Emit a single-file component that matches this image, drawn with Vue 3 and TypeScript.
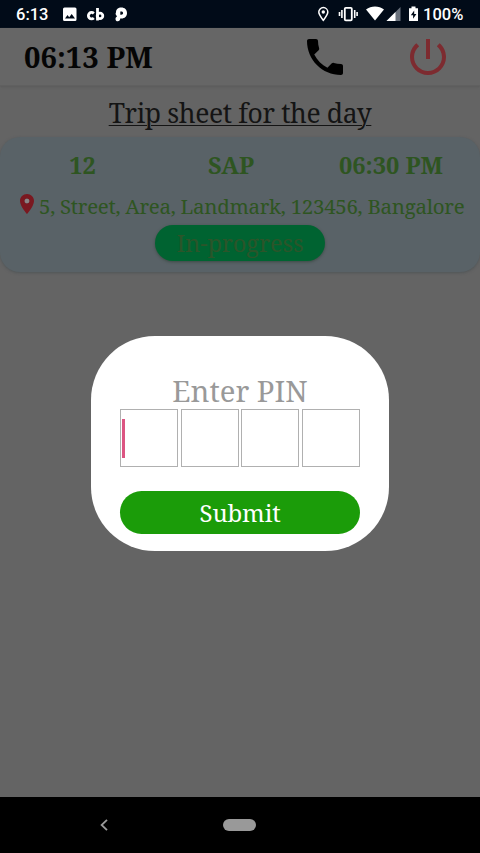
<script setup lang="ts">
import { ref } from 'vue'

interface Trip {
  count: string
  company: string
  time: string
  address: string
  status: string
}

const trip: Trip = {
  count: '12',
  company: 'SAP',
  time: '06:30 PM',
  address: '5, Street, Area, Landmark, 123456, Bangalore',
  status: 'In-progress',
}
const active = ref<number>(0)
</script>

<template>
  <div class="screen">
    <div class="status">
      <span class="clock">6:13</span>
      <svg class="left-icons" width="66" height="28" viewBox="0 0 66 28">
        <path fill="#fff" fill-rule="evenodd" d="M2.500 7.500h10.500q1.500 0 1.500 1.500v10.500q0 1.500-1.500 1.500H2.500Q1 21 1 19.500V9q0-1.500 1.500-1.500zM3 18.500h10l-3.300-4.500-2.500 3.200-1.700-2.100z" />
        <g fill="none" stroke="#fff" stroke-width="2.800">
          <path d="M31.800 13.400a3.200 3.200 0 1 0 0 4.600M35.500 8v12.400" />
          <circle cx="38" cy="15.900" r="2.800" />
        </g>
        <path fill="#fff" fill-rule="evenodd" d="M54 12.300c0-3 2.200-4.800 5.300-4.800 3.400 0 5.700 2.200 5.700 5.400 0 3.300-2.300 5.500-5.500 5.500h-1.300c0 1.800-.9 2.800-2.400 2.800-1.400 0-2.300-.9-2.300-2.300 0-1 .5-1.800 1.500-2.300l-1.500-2.500zM58.300 11.500v3.300h1c1.100 0 1.800-.7 1.800-1.700s-.7-1.600-1.800-1.600z" />
      </svg>
      <svg class="right-icons" width="104" height="28" viewBox="0 0 104 28">
        <path fill="none" stroke="#fff" stroke-width="1.500" d="M7.300 20.300c-2.600-3.200-4.500-5.500-4.500-8.200a4.500 4.500 0 0 1 9 0c0 2.700-1.900 5-4.500 8.200z" />
        <circle cx="7.300" cy="12" r="1.700" fill="#fff" />
        <rect x="28.800" y="7.800" width="7" height="12.500" rx="1" fill="none" stroke="#fff" stroke-width="1.800" />
        <path stroke="#fff" stroke-width="1.600" d="M25.900 10v8M23.500 12v4M38.700 10v8M41.100 12v4" />
        <path fill="#fff" d="M50 9.400c5-4 13-4 18 0L59 20.500z" />
        <path fill="#69717c" d="M84.500 7v14H70.500z" />
        <path fill="#fff" d="M79.500 12v9h-9z" />
        <path fill="#fff" fill-rule="evenodd" d="M95.500 6.500h4v1.700h2.500V21h-9V8.200h2.500zM98.200 10.500l-3.400 4.700h2.300v3.500l3.300-4.700h-2.200z" />
      </svg>
      <span class="battery">100%</span>
    </div>

    <header class="bar">
      <span class="time">06:13 PM</span>
      <svg class="phone" width="36" height="36" viewBox="3 3 18 18">
        <path d="M6.620 10.790c1.440 2.830 3.760 5.140 6.590 6.590l2.200-2.200c.27-.27.67-.36 1.020-.24 1.120.37 2.330.57 3.570.57.55 0 1 .45 1 1V20c0 .55-.45 1-1 1-9.390 0-17-7.610-17-17 0-.55.45-1 1-1h3.500c.55 0 1 .45 1 1 0 1.250.2 2.450.57 3.570.11.350.030.740-.25 1.020l-2.200 2.200z" />
      </svg>
      <svg class="power" width="36" height="36" viewBox="3 3 18 18">
        <path fill="#7d2b30" d="M13 3h-2v10h2V3zm4.830 2.170l-1.420 1.420C17.990 7.860 19 9.810 19 12c0 3.870-3.130 7-7 7s-7-3.130-7-7c0-2.190 1.010-4.140 2.580-5.420L6.170 5.170C4.230 6.820 3 9.260 3 12c0 4.970 4.030 9 9 9s9-4.030 9-9c0-2.740-1.230-5.180-3.170-6.830z" />
      </svg>
    </header>

    <main class="content">
      <h1 class="title">Trip sheet for the day</h1>
      <section class="card">
        <div class="row">
          <b class="count">{{ trip.count }}</b>
          <b class="company">{{ trip.company }}</b>
          <b class="trip-time">{{ trip.time }}</b>
        </div>
        <div class="address">
          <svg width="14" height="20" viewBox="5 2 14 20">
            <path fill="#7a1820" d="M12 2C8.130 2 5 5.130 5 9c0 5.250 7 13 7 13s7-7.750 7-13c0-3.870-3.130-7-7-7zm0 9.500a2.500 2.500 0 1 1 0-5 2.500 2.500 0 0 1 0 5z" />
            <circle cx="12" cy="9" r="2.300" fill="#8b8485" />
          </svg>
          <span>{{ trip.address }}</span>
        </div>
        <div class="badge">{{ trip.status }}</div>
      </section>
    </main>

    <div class="dialog">
      <div class="label">Enter PIN</div>
      <div class="pins">
        <div v-for="n in 4" :key="n" class="pin" @click="active = n - 1">
          <i v-if="active === n - 1" class="caret"></i>
        </div>
      </div>
      <button class="submit">Submit</button>
    </div>

    <nav class="nav">
      <svg class="back" width="8" height="12" viewBox="0 0 8 12">
        <path fill="none" stroke="#999" stroke-width="1.800" d="M7 .8L1.600 6 7 11.200" />
      </svg>
      <span class="home"></span>
    </nav>
  </div>
</template>

<style>
body {
  margin: 0;
}
</style>

<style scoped>
.screen {
  position: relative;
  display: flex;
  flex-direction: column;
  width: 480px;
  height: 853px;
  overflow: hidden;
  background: #646464;
  font-family: "Noto Serif", "DejaVu Serif Condensed", "DejaVu Serif", serif;
  font-stretch: condensed;
  white-space: nowrap;
}
.status {
  display: flex;
  align-items: center;
  box-sizing: border-box;
  height: 28px;
  padding-left: 16px;
  background: #010b18;
  color: #fff;
  font: 500 16.500px/30px Roboto, sans-serif;
}
.clock,
.battery {
  padding-top: 2px;
}
.clock {
  width: 46px;
}
.right-icons {
  margin-left: 188px;
}
.battery {
  margin-left: 3px;
}
.bar {
  display: flex;
  align-items: center;
  box-sizing: border-box;
  height: 58px;
  padding-left: 24px;
  background: #666;
  border-bottom: 1px solid #606060;
  box-shadow: 0 1px 2px #5a5a5a;
}
.time {
  width: 283px;
  font-size: 29.200px;
  font-weight: bold;
  line-height: 40px;
  padding-top: 1px;
  color: #050505;
}
.power {
  margin-left: 67px;
}
.content {
  flex: 1;
}
.title {
  margin: 0;
  height: 51px;
  line-height: 54px;
  text-align: center;
  font-size: 26.500px;
  letter-spacing: -0.380px;
  font-weight: 400;
  color: #141414;
  text-decoration: underline;
  text-decoration-thickness: 1px;
  text-underline-offset: 2px;
}
.card {
  box-sizing: border-box;
  height: 135px;
  padding-top: 11px;
  border-radius: 20px;
  background: #596267;
  box-shadow: 0 1px 3px #505557;
}
.row {
  display: grid;
  grid-template-columns: 165px 132px 188px;
  height: 34px;
  line-height: 35px;
  text-align: center;
  font-size: 23.600px;
  color: #2e5521;
}
.address {
  display: flex;
  align-items: center;
  height: 41px;
  padding-left: 20px;
  gap: 5px;
  font-size: 20.500px;
  letter-spacing: -0.300px;
  color: #2e5521;
}
.address span {
  padding-top: 7px;
}
.address svg {
  margin-top: 3px;
}
.badge {
  width: 170px;
  height: 36px;
  margin: 2px auto 0;
  border-radius: 18px;
  background: #006331;
  box-shadow: 0 1px 3px #3c4b45;
  color: #2b552a;
  text-align: center;
  font-size: 23.600px;
  letter-spacing: -0.100px;
  line-height: 36px;
}
.dialog {
  position: absolute;
  left: 91px;
  top: 336px;
  box-sizing: border-box;
  width: 298px;
  height: 215px;
  padding: 37px 29px 0;
  border-radius: 64px;
  background: #fff;
}
.label {
  height: 36px;
  line-height: 36px;
  text-align: center;
  font-size: 29.300px;
  color: #999;
}
.pins {
  display: flex;
  justify-content: space-between;
}
.pin {
  box-sizing: border-box;
  width: 58px;
  height: 58px;
  padding: 9px 0 0 1px;
  border: 1px solid #b0b0b0;
}
.caret {
  display: block;
  width: 2.500px;
  height: 39px;
  background: #dc5582;
}
.submit {
  display: block;
  width: 240px;
  height: 43px;
  margin: 24px 0 0;
  padding: 0;
  border: 0;
  border-radius: 22px;
  background: #1b9c09;
  color: #fff;
  font-family: inherit;
  font-stretch: inherit;
  font-size: 24px;
  letter-spacing: -0.150px;
  line-height: 43px;
}
.nav {
  display: flex;
  align-items: center;
  height: 56px;
  padding-left: 100px;
  background: #000;
}
.home {
  width: 33px;
  height: 12px;
  margin-left: 115px;
  border-radius: 6px;
  background: #999;
}
</style>
